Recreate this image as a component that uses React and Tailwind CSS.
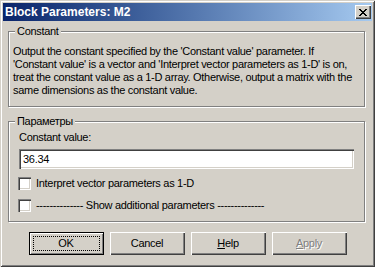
import React from 'react';

const raised = 'shadow-[inset_1px_1px_#ffffff,inset_-1px_-1px_#404040,inset_-2px_-2px_#808080]';
const sunken = 'shadow-[inset_1px_1px_#808080,inset_2px_2px_#404040,inset_-1px_-1px_#ffffff,inset_-2px_-2px_#d4d0c8]';

function CloseGlyph() {
  // 8x7 pixel "x" like the Marlett close glyph
  return (
    <svg width="8" height="7" viewBox="0 0 8 7" shapeRendering="crispEdges">
      <path
        d="M0 0h2v1H0zM6 0h2v1H6zM1 1h2v1H1zM5 1h2v1H5zM2 2h4v1H2zM3 3h2v1H3zM2 4h4v1H2zM1 5h2v1H1zM5 5h2v1H5zM0 6h2v1H0zM6 6h2v1H6z"
        fill="#000"
      />
    </svg>
  );
}

function GroupBox({ title, className, children }) {
  return (
    <div
      className={`relative ml-[5px] w-[357px] border border-[#808080] shadow-[inset_1px_1px_#ffffff,1px_1px_#ffffff] ${className}`}
    >
      <span className="absolute -top-[7px] left-[6px] px-[2px] bg-[#d4d0c8] leading-[13px]">
        {title}
      </span>
      {children}
    </div>
  );
}

function Checkbox({ label }) {
  return (
    <div className="flex items-center h-[13px] -ml-[1px]">
      <div className={`w-[13px] h-[13px] bg-white ${sunken}`} />
      <span className="ml-[5px] leading-[13px] whitespace-nowrap">{label}</span>
    </div>
  );
}

function Button({ children, isDefault, disabled }) {
  return (
    <button
      className={`relative w-[75px] h-[23px] bg-[#d4d0c8] flex items-center justify-center leading-[13px] ${
        isDefault
          ? 'border border-black shadow-[inset_1px_1px_#ffffff,inset_-1px_-1px_#808080]'
          : raised
      } ${disabled ? 'text-[#808080] [text-shadow:1px_1px_0_#ffffff]' : 'text-black'}`}
    >
      {isDefault && (
        <span className="absolute left-[3px] right-[3px] top-[3px] bottom-[3px] border border-dotted border-black" />
      )}
      {children}
    </button>
  );
}

const description = [
  "Output the constant specified by the 'Constant value' parameter. If",
  "'Constant value' is a vector and 'Interpret vector parameters as 1-D' is on,",
  'treat the constant value as a 1-D array. Otherwise, output a matrix with the',
  'same dimensions as the constant value.',
];

export default function App() {
  return (
    <div
      className="w-[375px] h-[267px] bg-[#d4d0c8] p-[3px] text-[11px] tracking-[-0.3px] text-black shadow-[inset_1px_1px_#d4d0c8,inset_-1px_-1px_#404040,inset_2px_2px_#ffffff,inset_-2px_-2px_#808080]"
      style={{ fontFamily: '"Liberation Sans", Arial, sans-serif' }}
    >
      {/* Title bar */}
      <div className="h-[18px] flex items-center justify-between bg-gradient-to-r from-[#0a246a] to-[#a6caf0]">
        <span className="pl-[2px] text-white font-bold text-[12px] tracking-normal leading-[18px]">
          Block Parameters: M2
        </span>
        <div className={`w-[16px] h-[14px] mr-[1px] bg-[#d4d0c8] flex items-center justify-center ${raised}`}>
          <CloseGlyph />
        </div>
      </div>

      {/* Description */}
      <GroupBox title="Constant" className="mt-[10px] h-[76px] pt-[13px] pl-[4px]">
        {description.map(line => (
          <div key={line} className="leading-[13px] whitespace-nowrap">
            {line}
          </div>
        ))}
      </GroupBox>

      {/* Parameters */}
      <GroupBox title="Параметры" className="mt-[14px] h-[101px] pt-[9px] px-[10px]">
        <div className="leading-[13px]">Constant value:</div>
        <div className={`mt-[5px] h-[20px] bg-white flex items-center pl-[4px] leading-[13px] ${sunken}`}>
          36.34
        </div>
        <div className="mt-[8px]">
          <Checkbox label="Interpret vector parameters as 1-D" />
        </div>
        <div className="mt-[9px]">
          <Checkbox label="-------------- Show additional parameters --------------" />
        </div>
      </GroupBox>

      {/* Buttons */}
      <div className="mt-[10px] flex justify-center gap-[6px]">
        <Button isDefault>OK</Button>
        <Button>Cancel</Button>
        <Button>
          <span>
            <span className="underline">H</span>elp
          </span>
        </Button>
        <Button disabled>
          <span>
            <span className="underline">A</span>pply
          </span>
        </Button>
      </div>
    </div>
  );
}
